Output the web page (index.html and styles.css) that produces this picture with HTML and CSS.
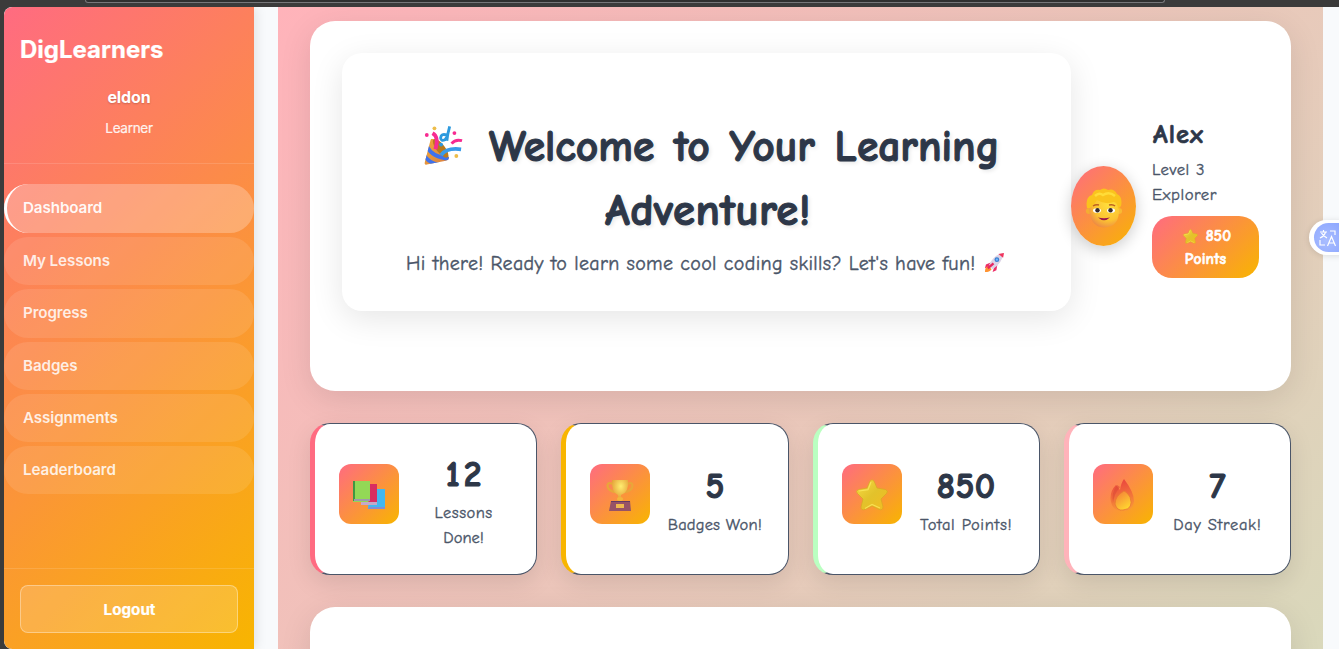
FILE: index.html
```html
<!DOCTYPE html>
<html lang="en">
<head>
<meta charset="utf-8">
<title>DigLearners</title>
<link rel="stylesheet" href="styles.css">
</head>
<body>
<svg class="defs" width="0" height="0" aria-hidden="true">
  <defs>
    <linearGradient id="gold" x1="0" y1="0" x2="1" y2="1"><stop offset="0" stop-color="#f8dc45"/><stop offset=".5" stop-color="#e2c22b"/><stop offset="1" stop-color="#f3bd21"/></linearGradient>
    <radialGradient id="face" cx=".65" cy=".3" r=".75"><stop offset="0" stop-color="#ffdf3c"/><stop offset=".65" stop-color="#fcc332"/><stop offset="1" stop-color="#ed8a45"/></radialGradient>
    <radialGradient id="cup" cx=".55" cy=".3" r=".7"><stop offset="0" stop-color="#ffed70"/><stop offset="1" stop-color="#df942e"/></radialGradient>
    <linearGradient id="flame" x1=".3" y1="0" x2=".5" y2="1"><stop offset="0" stop-color="#e9413f"/><stop offset="1" stop-color="#f89737"/></linearGradient>
    <linearGradient id="ember" x1="0" y1="0" x2=".6" y2="1"><stop offset="0" stop-color="#f3773a"/><stop offset="1" stop-color="#ffd52f"/></linearGradient>
    <linearGradient id="cone" x1="0" y1="0" x2="1" y2="1"><stop offset="0" stop-color="#f2ae36"/><stop offset="1" stop-color="#d97c43"/></linearGradient>
    <clipPath id="cone-shape"><path d="M8 15Q9 13 12 15Q22 22 27 33Q28 36 24 37L4 41Q1 42 2 38Z"/></clipPath>
    <symbol id="star" viewBox="0 0 32 32">
      <path d="M14 2Q16-.5 18 2L21 9L29.500 10.500Q33 12 30.500 14.500L25 20L27 28Q26.500 31.800 23 30.400L16 27L9 30.400Q5.200 32 5 28L7 20L1.500 14.500Q-1 12 2.500 10.500L11 9Z" fill="url(#gold)" stroke="#d9a624" stroke-width=".7" stroke-linejoin="round"/>
      <path d="M15 3L12 10.600L3 12M9 29.500L16 25.500L24 29" fill="none" stroke="#fff06a" stroke-width="1.200" opacity=".65"/>
    </symbol>
  </defs>
</svg>
<div class="chrome"><div class="address"></div></div>
<div class="app">
  <aside class="sidebar">
    <div class="profile">
      <div class="brand">DigLearners</div>
      <div class="user">eldon</div>
      <div class="role">Learner</div>
    </div>
    <nav class="nav">
      <a class="nav-item active">Dashboard</a>
      <a class="nav-item">My Lessons</a>
      <a class="nav-item">Progress</a>
      <a class="nav-item">Badges</a>
      <a class="nav-item">Assignments</a>
      <a class="nav-item">Leaderboard</a>
    </nav>
    <div class="side-foot"><button class="logout">Logout</button></div>
  </aside>
  <main class="content">
    <section class="hero">
      <div class="welcome">
        <h1 class="title">
          <span class="line first"><svg class="party" viewBox="0 0 42 42">
            <g clip-path="url(#cone-shape)"><path d="M0 10H30V42H0Z" fill="url(#cone)"/>
            <path d="M4 22Q10 34 28 35M1 31Q6 40 17 41" fill="none" stroke="#3e72ed" stroke-width="4"/></g>
            <ellipse cx="18.500" cy="24" rx="4.500" ry="12" transform="rotate(-38 18.500 24)" fill="#b97a1c"/>
            <path d="M10 8Q17 12 13 25" fill="none" stroke="#f72b91" stroke-width="4"/>
            <path d="M19 31Q25 23 40 25" fill="none" stroke="#399bea" stroke-width="4"/>
            <path d="M30 19Q34 14 41 16" fill="none" stroke="#f72b91" stroke-width="3"/>
            <path d="M28 1Q26 8 25 16M25 10Q19 8 18.500 13Q19 17 23 15L26 11" fill="none" stroke="#2d9ade" stroke-width="3"/>
            <g fill="#f72b91"><circle cx="4" cy="10" r="2"/><circle cx="33" cy="8" r="2"/></g>
            <g fill="#edbd4a"><circle cx="12" cy="3" r="2"/><circle cx="35" cy="32" r="2"/></g><circle cx="19" cy="20" r="2" fill="#2d9ade"/>
          </svg><span class="welcome-words">Welcome to Your Learning</span></span>
          <span class="line second">Adventure!</span>
        </h1>
        <p class="subtitle"><span>Hi there! Ready to learn some cool coding skills? Let's have fun!</span><svg class="rocket" viewBox="0 0 22 22">
          <path d="M7 11L2 13L1 17L7 15ZM11 15L9 21L13 19L14 13Z" fill="#ed2c68"/>
          <path d="M1 21Q1 15 5 15L8 18Q6 21 1 21Z" fill="#ff9331"/>
          <path d="M5 14Q10 3 20 1Q20 11 9 18Z" fill="#dcd3e6"/>
          <path d="M15 2L21 1L20 6Z" fill="#f0345d"/><path d="M4 17L10 12" stroke="#e62662" stroke-width="2.500"/>
          <circle cx="13.500" cy="8" r="2.500" fill="#397fd1"/><circle cx="13.500" cy="8" r="1.200" fill="#72baff"/>
        </svg></p>
      </div>
      <div class="learner">
        <div class="avatar"><svg class="face" viewBox="0 0 36 40">
          <circle cx="2.800" cy="23" r="3" fill="#f4ad32"/><circle cx="33.200" cy="23" r="3" fill="#f8ba32"/>
          <path d="M3 17Q3 7 18 6Q33 7 33 20Q34 39 18 39.500Q3 39 3 17Z" fill="url(#face)"/>
          <path d="M1 20Q-1 9 6 7Q8 1 14 2Q18-1 22 2Q28 0 31 6Q37 9 35 18L32 21Q32 15 28 14Q19 17 11 12Q8 17 4 20Z" fill="#fac31d"/>
          <path d="M9 8Q13 4 17 7Q23 3 29 8" fill="none" stroke="#ffdc38" stroke-width="2.500"/>
          <path d="M7 18Q10 16 13 17M23 17Q27 16 29 18" fill="none" stroke="#bd6120" stroke-width="1.500"/>
          <ellipse cx="11" cy="22.500" rx="4" ry="2.300" fill="#fff"/><ellipse cx="25" cy="22.500" rx="4" ry="2.300" fill="#fff"/>
          <circle cx="11.500" cy="22.300" r="2.200" fill="#362b2d"/><circle cx="24.500" cy="22.300" r="2.200" fill="#362b2d"/>
          <path d="M12 29.500Q18 31 24 29.500Q18 35 12 29.500Z" fill="#9b1748"/>
        </svg></div>
        <div class="learner-info">
          <div class="name">Alex</div>
          <div class="level">Level 3<br>Explorer</div>
          <div class="points"><div class="points-row"><svg class="mini-star"><use href="#star"/></svg><span>850</span></div><div>Points</div></div>
        </div>
      </div>
    </section>
    <section class="stats">
      <article class="stat rose">
        <div class="stat-icon books"><svg viewBox="0 0 32 32">
          <path d="M16 9H32V27L30 29H15Z" fill="#43b7ef"/><path d="M16 27H32V29H15Z" fill="#838ed0"/>
          <path d="M10 4H24V22L21 25H8Z" fill="#d92d61"/><path d="M8 22H24V25H8Z" fill="#c3a9c8"/>
          <path d="M1 1H17V20L15 22H0Z" fill="#93d856"/><path d="M0 1H2V21H0Z" fill="#409742"/><path d="M1 19H17V21H1Z" fill="#9e99ac"/>
        </svg></div>
        <div class="stat-text"><div class="num n12">12</div><div class="label lessons">Lessons<br><span class="done">Done!</span></div></div>
      </article>
      <article class="stat amber">
        <div class="stat-icon"><svg viewBox="0 0 32 32">
          <path d="M9 5Q2 2 4 9Q7 13 12 13M23 5Q30 2 28 9Q25 13 20 13" fill="none" stroke="#e9a63a" stroke-width="2.200"/>
          <path d="M8 1H24Q25 14 17 16V22H14V16Q7 13 8 1Z" fill="url(#cup)"/><ellipse cx="16" cy="20" rx="3" ry="2" fill="#f2b53c"/>
          <path d="M7 22H26L27 32H5Z" fill="#975366"/><path d="M7 22H26V23H7Z" fill="#633b66"/><path d="M12 25H20V29H12Z" fill="#f0b94e"/>
        </svg></div>
        <div class="stat-text"><div class="num">5</div><div class="label badges">Badges Won!</div></div>
      </article>
      <article class="stat mint">
        <div class="stat-icon"><svg><use href="#star"/></svg></div>
        <div class="stat-text"><div class="num n850">850</div><div class="label total">Total Points!</div></div>
      </article>
      <article class="stat pink">
        <div class="stat-icon"><svg viewBox="0 0 32 32">
          <path d="M9 6Q2 13 4 23Q6 32 16 32Q26 32 27 22Q27 13 17 0Q14 4 13 11Z" fill="url(#flame)"/>
          <path d="M10 6Q4 14 6 24Q7 15 13 8Z" fill="#dc4937" opacity=".6"/>
          <path d="M17 12Q8 17 8 25Q10 32 16 31Q27 30 23 18Q20 13 17 12Z" fill="url(#ember)" stroke="#e87831" stroke-width=".8"/>
        </svg></div>
        <div class="stat-text"><div class="num">7</div><div class="label streak">Day Streak!</div></div>
      </article>
    </section>
    <section class="next"></section>
  </main>
  <div class="translate"><div class="translate-disc"><svg viewBox="0 0 18 18" fill="none" stroke="#fff" stroke-width="1.200">
    <path d="M1 3H8M4.500 1V3M6.500 3Q5.500 7 1 9M2.500 4Q4 7 8 9M11 2H16V6M1 11V16H6M8.500 17L12.500 7.500L16.500 17M10 14H15"/>
  </svg></div></div>
</div>
</body>
</html>
```

FILE: styles.css
```css
* { box-sizing: border-box; }
html, body { height: 100%; }
body { margin: 0; overflow: hidden; background: #3b3b3b; font-family: Inter, "Liberation Sans", sans-serif; }
.defs { position: absolute; }
svg { display: block; flex: none; }

.chrome { height: 7px; overflow: hidden; padding-left: 85px; }
.address { width: 1080px; height: 3px; border: 1px solid #77777a; border-top: 0; border-radius: 0 0 12px 12px; background: #303030; }
.app { position: relative; display: flex; height: 642px; margin-left: 4px; background: #f8fafc; border-radius: 8px 0 0 8px; overflow: hidden; }

.sidebar { position: relative; z-index: 1; flex: none; display: flex; flex-direction: column; width: 250px; background: linear-gradient(135deg, #ff6b81, #f8b500); border-radius: 8px 0 0 8px; box-shadow: 2px 0 12px rgba(0,0,0,.1); color: #fff; }
.profile { height: 157px; padding: 27px 16px 0; border-bottom: 1px solid rgba(255,255,255,.13); text-align: center; }
.brand { text-align: left; font-size: 24px; line-height: 32px; font-weight: 700; -webkit-text-stroke: .2px; }
.user { margin-top: 19px; font-size: 16px; line-height: 24px; font-weight: 700; letter-spacing: -.1px; text-shadow: 0 1px 2px rgba(0,0,0,.2); }
.role { margin-top: 9px; font-size: 13.600px; line-height: 20px; opacity: .9; letter-spacing: -.35px; -webkit-text-stroke: .2px; }
.nav { display: flex; flex-direction: column; gap: 4px; padding-top: 20px; }
.nav-item { height: 48.300px; padding-left: 16px; border-left: 3px solid transparent; border-radius: 25px; background: rgba(255,255,255,.1); color: rgba(255,255,255,.85); font-size: 15.200px; font-weight: 600; line-height: 47.600px; letter-spacing: -.1px; }
.nav-item.active { height: 49px; border-left-color: #fff; background: rgba(255,255,255,.25); color: rgba(255,255,255,.94); }
.side-foot { height: 81px; margin-top: auto; padding: 16px; border-top: 1px solid rgba(255,255,255,.13); }
.logout { display: block; width: 218px; height: 48px; padding: 0 0 0 1px; border: 1px solid rgba(255,255,255,.35); border-radius: 8px; background: rgba(255,255,255,.17); color: #fff; font: 700 15.200px Inter, sans-serif; -webkit-text-stroke: .2px; }

.content { flex: none; width: 1045px; margin-left: 24px; padding: 14px 32px 0; overflow: hidden; background: linear-gradient(135deg, #ffb3ba, #b9f8bc) 0 0 / 1045px 2090px no-repeat; font-family: "Comic Sans MS", "Comic Neue", "Open Sans", sans-serif; color: #2d3748; }
.hero { display: flex; align-items: flex-start; height: 370px; padding: 32px; background: #fff; border-radius: 25px; box-shadow: 0 8px 32px rgba(0,0,0,.1); }
.welcome { flex: none; width: 729px; height: 258px; padding: 62px 0 0; background: #fff; border-radius: 20px; box-shadow: 0 8px 32px rgba(0,0,0,.1); }
.title { margin: 0; font-size: 43.500px; line-height: 64px; font-weight: 700; text-shadow: 2px 2px 4px rgba(0,0,0,.1); -webkit-text-stroke: 1.100px; }
.line { display: flex; align-items: center; white-space: nowrap; }
.first { padding-left: 81px; word-spacing: 4.300px; }
.party { width: 40px; height: 41px; margin: -3px 26px 0 0; }
.second { padding-left: 263px; font-size: 44.800px; letter-spacing: .5px; }
.subtitle { display: flex; margin: 5px 0 0 64px; color: #4a5568; font-size: 20px; line-height: 32px; letter-spacing: .330px; white-space: nowrap; -webkit-text-stroke: .4px; }
.rocket { width: 21px; height: 21px; margin: 4px 0 0 8px; }

.learner { display: flex; height: 306px; align-items: center; gap: 16px; }
.avatar { display: flex; align-items: center; justify-content: center; width: 65px; height: 80px; border-radius: 50%; background: linear-gradient(135deg, #ff6b81, #f8b500); box-shadow: 0 4px 15px rgba(0,0,0,.2); }
.face { width: 36px; height: 40px; margin-top: 3px; }
.learner-info { width: 107px; height: 183px; }
.name { padding: 1px 0 0 1px; font-size: 26.500px; line-height: 37px; font-weight: 700; letter-spacing: 1px; -webkit-text-stroke: .7px; }
.level { margin-top: 4px; color: #4a5568; font-size: 16.800px; line-height: 25.600px; letter-spacing: .5px; -webkit-text-stroke: .35px; }
.points { height: 62px; margin-top: 8px; padding-top: 9px; border-radius: 20px; background: linear-gradient(135deg, #ff6b81, #f8b500); color: #fff; font-size: 15.500px; font-weight: 700; line-height: 23px; letter-spacing: .2px; text-align: center; -webkit-text-stroke: .6px; }
.points-row { display: flex; align-items: center; justify-content: center; gap: 8px; padding-left: 3px; }
.mini-star { width: 15px; height: 15px; }

.stats { display: grid; grid-template-columns: repeat(4, 1fr); gap: 24px; margin-top: 32px; }
.stat { display: flex; align-items: center; height: 152px; padding: 0 24px 10px; border: 1px solid #4a5568; border-left-width: 5px; border-radius: 20px; background: #fff; box-shadow: 0 8px 25px rgba(0,0,0,.1); }
.rose { border-left-color: #ff6b81; }
.amber { border-left-color: #f8b500; }
.mint { border-left-color: #baffc1; }
.pink { border-left-color: #ffb3ba; }
.stat-icon { flex: none; display: flex; align-items: center; justify-content: center; width: 60px; height: 60px; border-radius: 12px; background: linear-gradient(135deg, #ff6b81, #f8b500); }
.stat-icon svg { width: 32px; height: 32px; margin-top: 1px; }
.stat-icon.books svg { margin-top: 4px; }
.stat-text { flex: 1; margin-left: 16px; padding-top: 11px; text-align: center; white-space: nowrap; }
.num { font-size: 35.500px; line-height: 51px; font-weight: 700; -webkit-text-stroke: 1.100px; }
.n12 { letter-spacing: 4px; margin-right: -4px; }
.n850 { letter-spacing: .5px; }
.label { color: #4a5568; font-size: 16.500px; line-height: 25.500px; -webkit-text-stroke: .35px; }
.lessons { letter-spacing: .5px; }
.done { letter-spacing: 0; }
.badges { letter-spacing: .15px; }
.total { letter-spacing: .7px; }
.streak { letter-spacing: .7px; }
.next { height: 400px; margin-top: 32px; background: #fff; border-radius: 25px; box-shadow: 0 8px 32px rgba(0,0,0,.1); }

.translate { position: absolute; top: 213px; right: -19px; width: 49px; height: 35px; padding: 3px 3px 3px 5px; border-radius: 18px; background: #fff; box-shadow: 0 1px 6px rgba(0,0,0,.12); }
.translate-disc { width: 41px; height: 29px; padding: 6px 5px; border-radius: 15px; background: radial-gradient(circle at 30% 60%, #a9bdff, #7f9cff); }
.translate svg { width: 18px; height: 18px; }
```
